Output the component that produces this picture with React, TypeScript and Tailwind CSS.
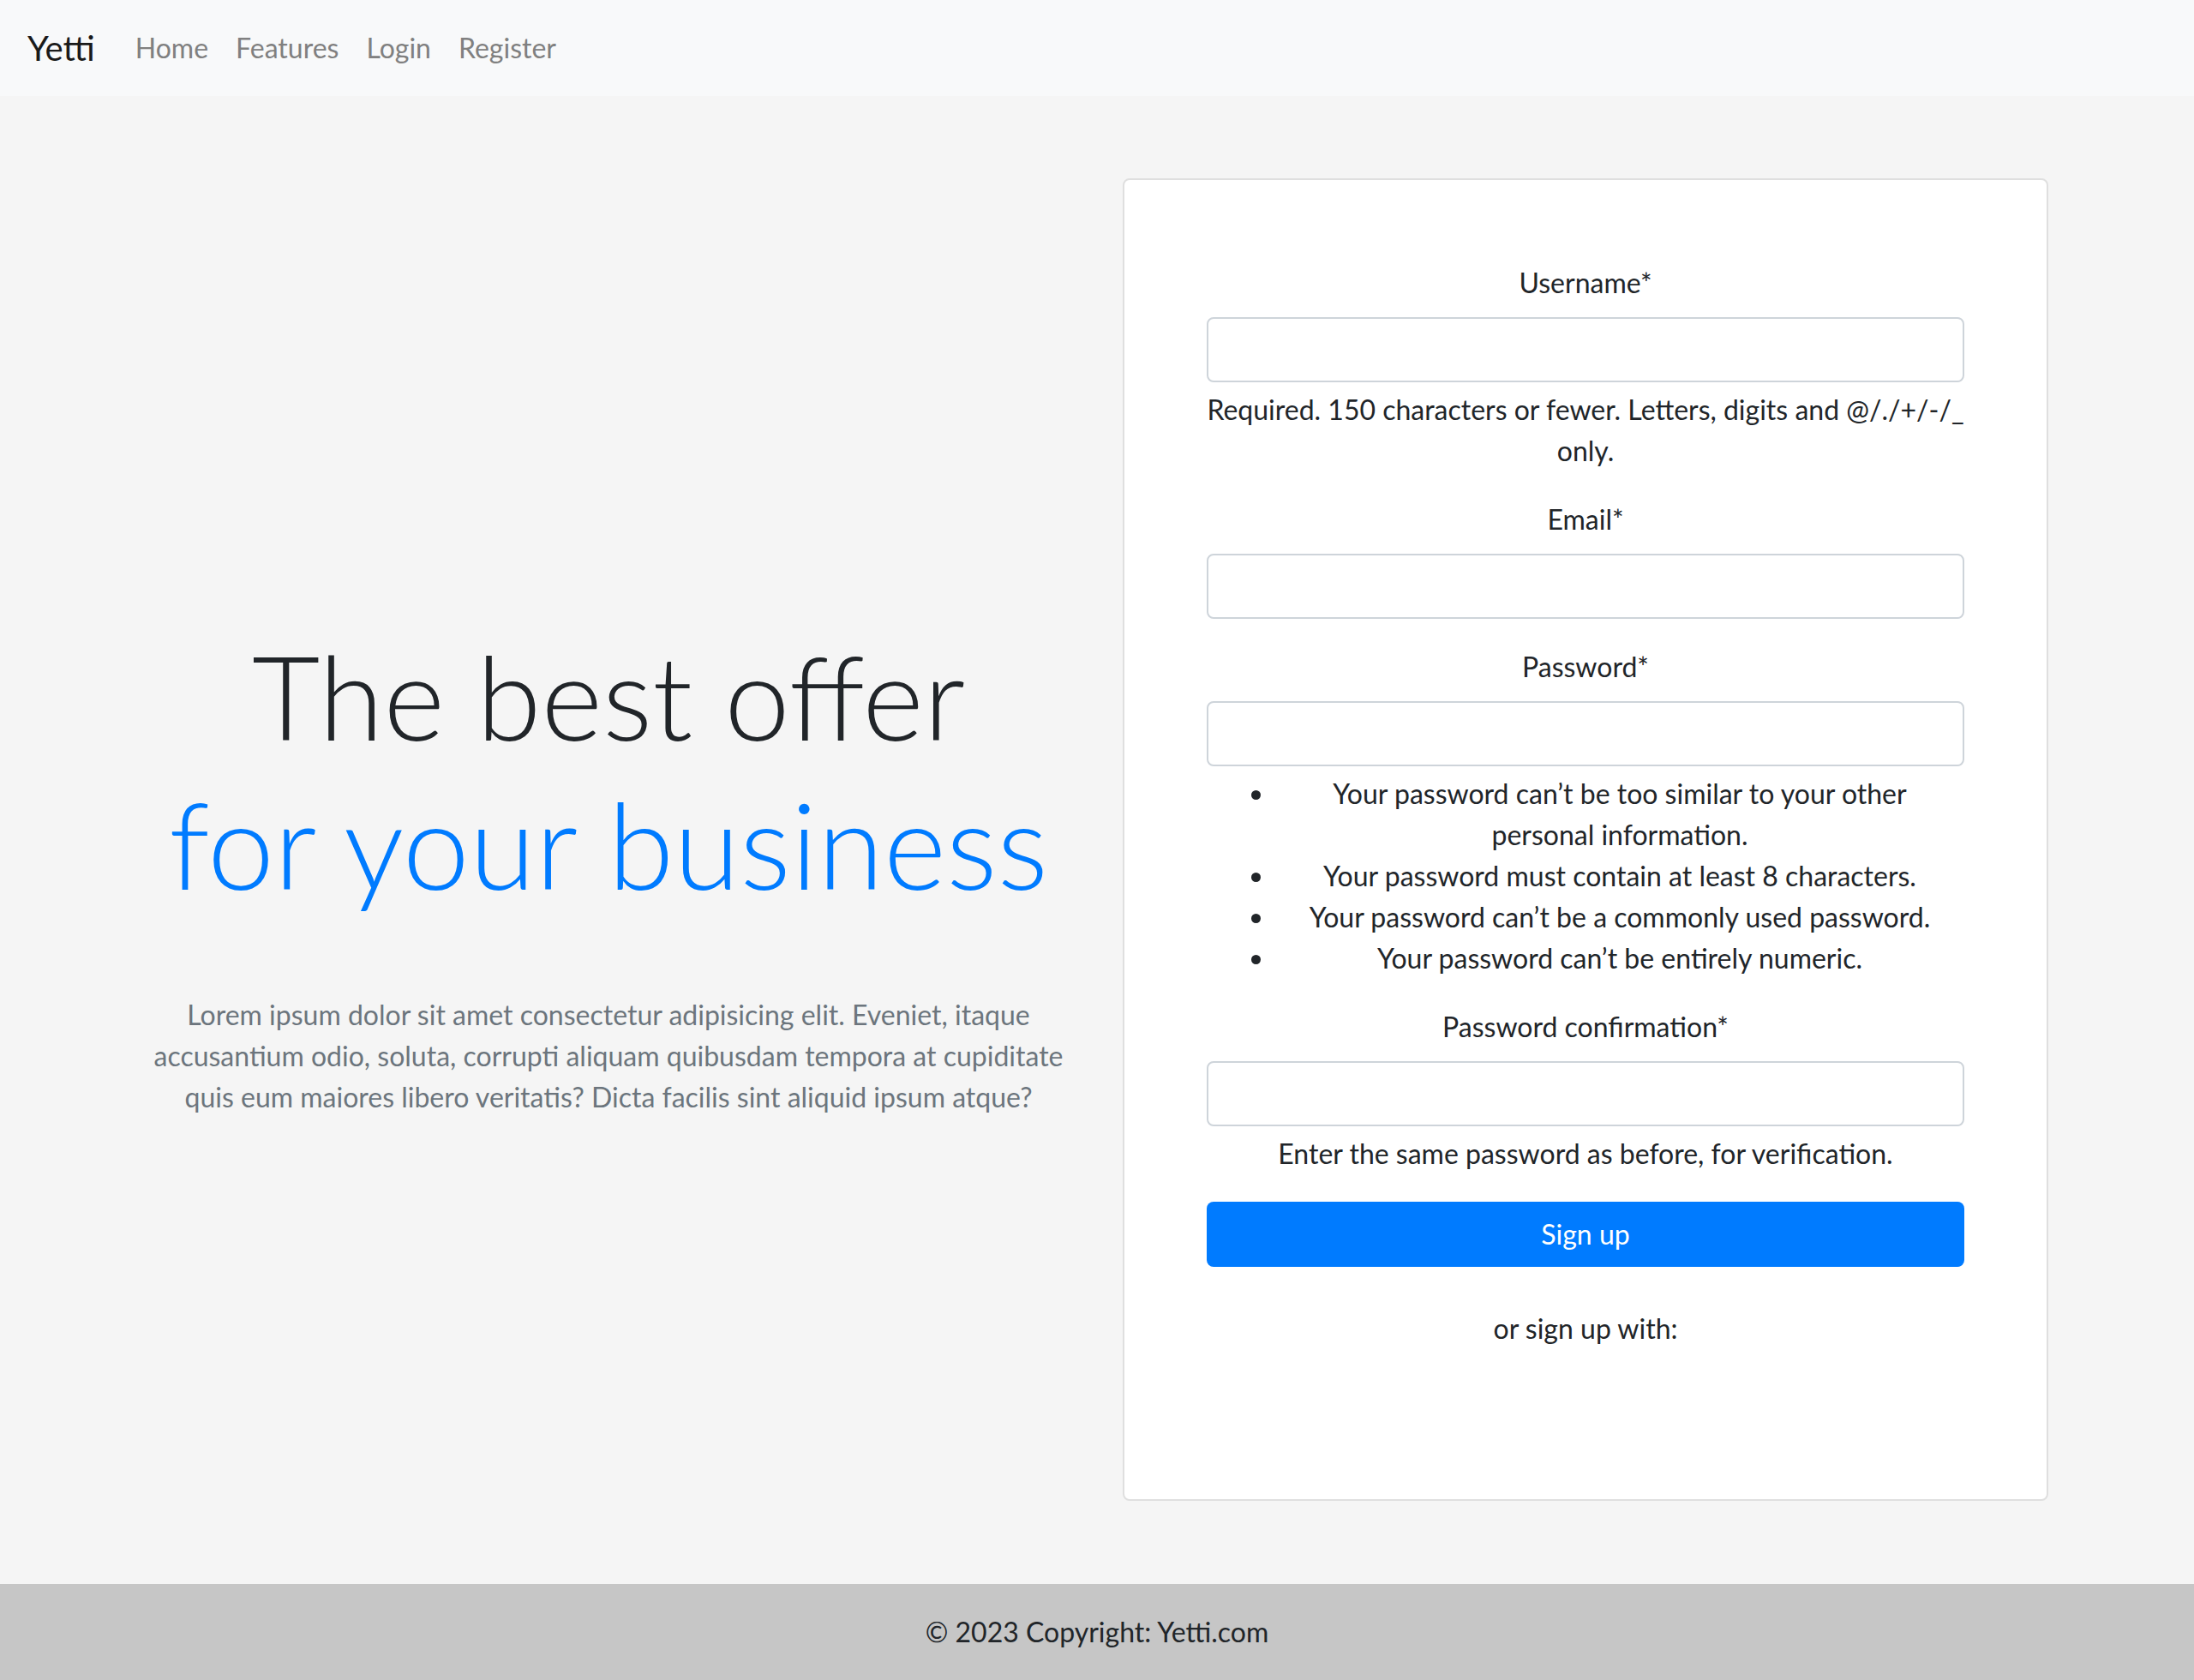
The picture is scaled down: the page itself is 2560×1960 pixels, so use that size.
import React from "react";

function Label({ children }: { children: React.ReactNode }) {
  return <label className="block text-center text-[32px] leading-[48px] text-[#212529] mb-[16px]">{children}</label>;
}

function Input({ type = "text" }: { type?: string }) {
  return (
    <input
      type={type}
      className="block w-full h-[76px] border-2 border-[#ced4da] rounded-[8px] bg-white px-[24px] text-[32px] outline-none"
    />
  );
}

export default function App() {
  return (
    <div className="font-[Lato,sans-serif] bg-[#f5f5f5] min-h-screen flex flex-col">
      {/* Navbar */}
      <nav className="h-[112px] bg-[#f8f9fa] flex items-center px-[32px]">
        <a className="text-[40px] leading-[60px] text-[#1a1a1a] mr-[31px]">Yetti</a>
        <ul className="flex items-center">
          {["Home", "Features", "Login", "Register"].map((l) => (
            <li key={l}>
              <a className="block px-[16px] text-[32px] leading-[48px] text-[#808080]">{l}</a>
            </li>
          ))}
        </ul>
      </nav>

      {/* Main */}
      <main className="flex-1 pt-[96px] pb-[96px]">
        <div className="w-[2280px] mx-auto">
          <div className="grid grid-cols-2">
            {/* Left column */}
            <div className="px-[30px] pt-[70px] flex flex-col justify-center text-center">
              <h1 className="font-light text-[#212529]">
                <span className="block text-[137px] leading-[173px]">The best offer</span>
                <span className="block text-[140px] leading-[173px] text-[#007bff]">for your business</span>
              </h1>
              <p className="mt-[89px] text-[32px] leading-[48px] text-[#6c757d] whitespace-nowrap">
                Lorem ipsum dolor sit amet consectetur adipisicing elit. Eveniet, itaque
                <br />
                accusantium odio, soluta, corrupti aliquam quibusdam tempora at cupiditate
                <br />
                quis eum maiores libero veritatis? Dicta facilis sint aliquid ipsum atque?
              </p>
            </div>

            {/* Right column */}
            <div className="px-[30px]">
              <div className="bg-white border-2 border-[#dfdfdf] rounded-[8px] p-[96px] text-center text-[#212529] text-[32px] leading-[48px]">
                <form onSubmit={(e) => e.preventDefault()}>
                  <div className="mb-[32px]">
                    <Label>Username*</Label>
                    <Input />
                    <div className="mt-[8px] whitespace-nowrap">
                      Required. 150 characters or fewer. Letters, digits and @/./+/-/_
                      <br />
                      only.
                    </div>
                  </div>

                  <div className="mb-[32px]">
                    <Label>Email*</Label>
                    <Input type="email" />
                  </div>

                  <div className="mb-[32px]">
                    <Label>Password*</Label>
                    <Input type="password" />
                    <ul className="mt-[8px] list-disc pl-[80px] text-center">
                      <li className="whitespace-nowrap">
                        Your password can’t be too similar to your other
                        <br />
                        personal information.
                      </li>
                      <li>Your password must contain at least 8 characters.</li>
                      <li>Your password can’t be a commonly used password.</li>
                      <li>Your password can’t be entirely numeric.</li>
                    </ul>
                  </div>

                  <div className="mb-[32px]">
                    <Label>Password confirmation*</Label>
                    <Input type="password" />
                    <div className="mt-[8px]">Enter the same password as before, for verification.</div>
                  </div>

                  <button
                    type="submit"
                    className="block w-full h-[76px] bg-[#007bff] text-white rounded-[8px] text-[32px] leading-[48px]"
                  >
                    Sign up
                  </button>
                </form>
                <p className="mt-[48px] mb-[79px]">or sign up with:</p>
              </div>
            </div>
          </div>
        </div>
      </main>

      {/* Footer */}
      <footer className="bg-[#c6c6c6] p-[32px] text-center text-[32px] leading-[48px] text-[#212529]">
        © 2023 Copyright: Yetti.com
      </footer>
    </div>
  );
}
